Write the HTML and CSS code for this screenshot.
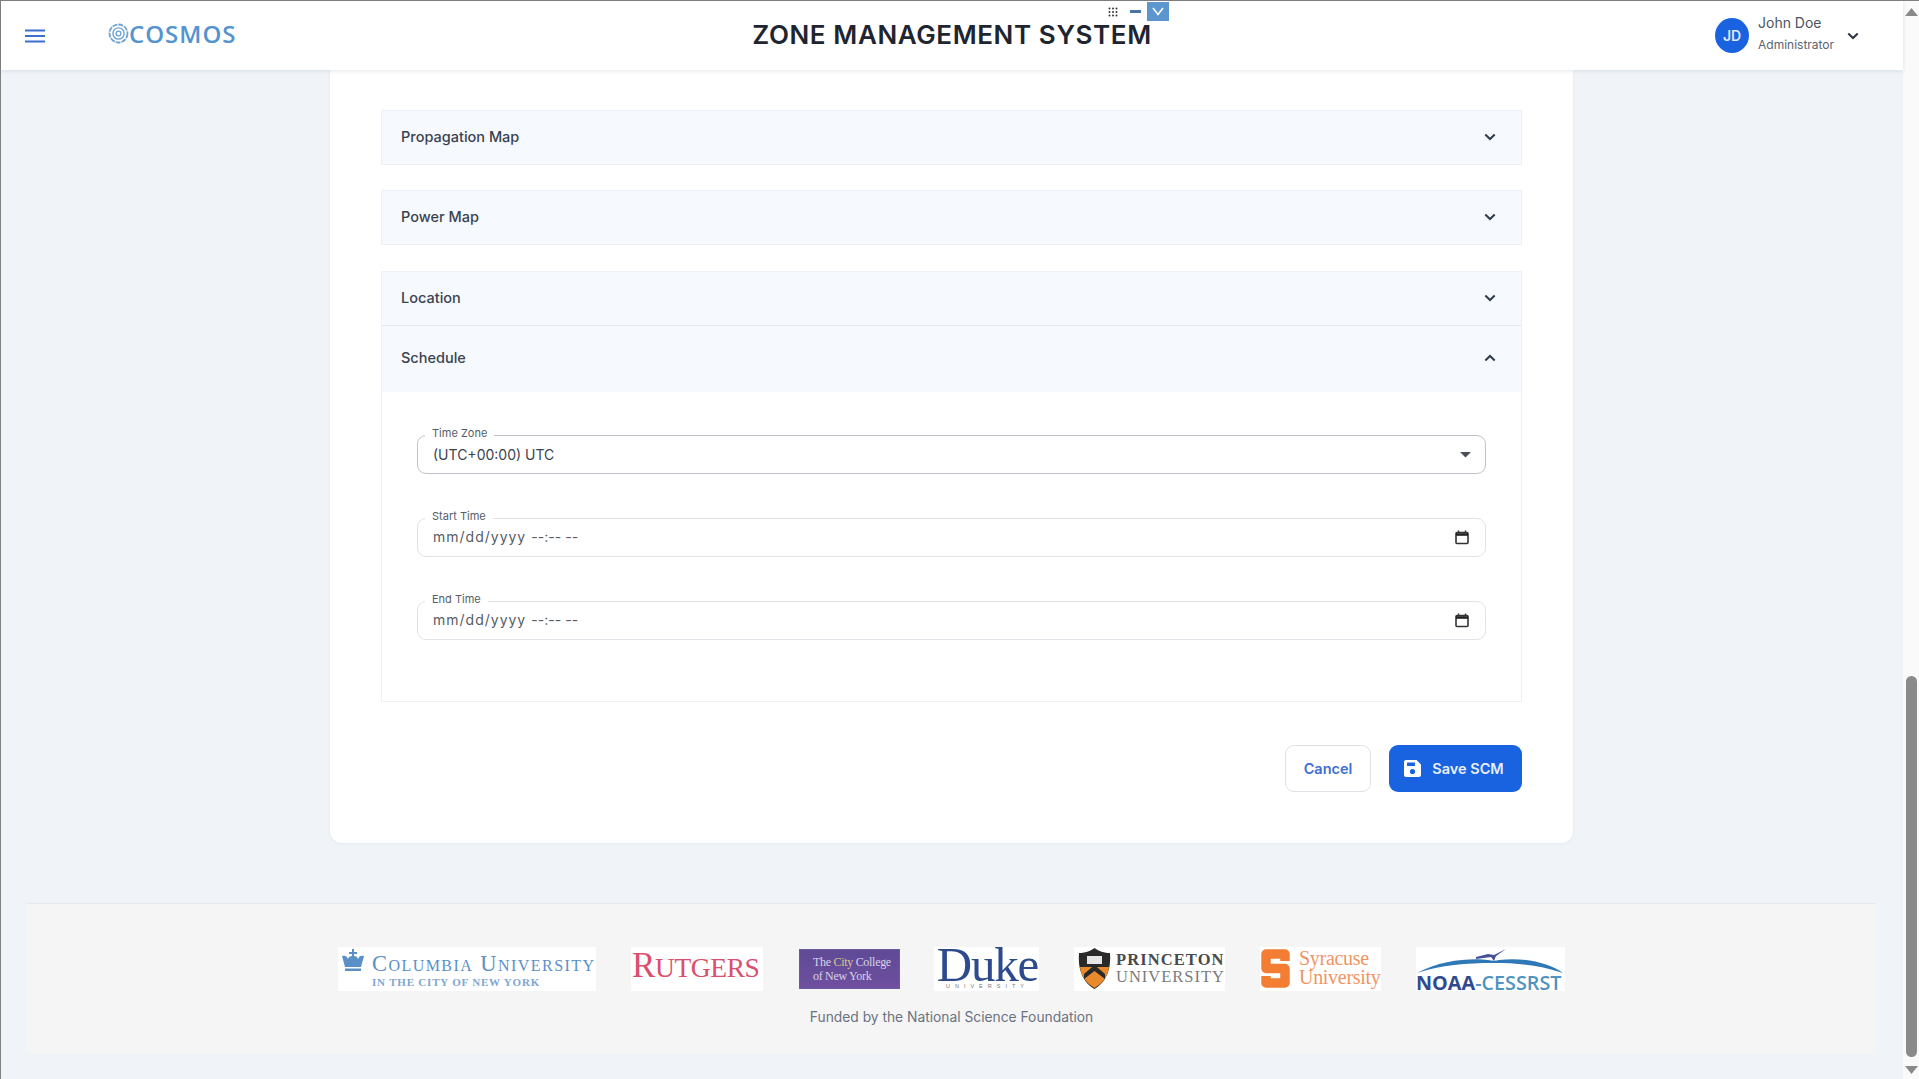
FILE: index.html
```html
<!DOCTYPE html>
<html lang="en">
<head>
<meta charset="utf-8">
<title>Zone Management System</title>
<link rel="stylesheet" href="styles.css">
</head>
<body>
<div class="window">
  <div class="page">
    <header class="topbar">
      <div class="topbar-left">
        <svg class="burger" width="20" height="14" viewBox="0 0 20 14"><path d="M0 1.5h20M0 7h20M0 12.5h20" stroke="#3a6fd0" stroke-width="2"/></svg>
        <div class="logo">
          <svg width="21" height="21" viewBox="0 0 21 21" fill="none" stroke="#6fa3d2"><circle cx="10.5" cy="10.5" r="9" stroke-width="1.8" stroke-dasharray="5 1"/><circle cx="10.5" cy="10.5" r="5.6" stroke-width="1.4"/><circle cx="10.5" cy="10.5" r="2.4" stroke-width="1.3"/></svg>
          <span class="logo-text">COSMOS</span>
        </div>
      </div>
      <h1 class="title">ZONE MANAGEMENT SYSTEM</h1>
      <div class="user">
        <span class="avatar">JD</span>
        <div class="user-info">
          <span class="user-name">John Doe</span>
          <span class="user-role">Administrator</span>
        </div>
        <svg class="user-caret" width="12" height="8" viewBox="0 0 12 8" fill="none"><path d="M1.3 1.5 6 6l4.7-4.5" stroke="#2b3240" stroke-width="2"/></svg>
      </div>
      <div class="float-tools">
        <svg width="10" height="10" viewBox="0 0 10 10" fill="#333"><circle cx="1.5" cy="1.5" r="1"/><circle cx="5" cy="1.5" r="1"/><circle cx="8.5" cy="1.5" r="1"/><circle cx="1.5" cy="5" r="1"/><circle cx="5" cy="5" r="1"/><circle cx="8.5" cy="5" r="1"/><circle cx="1.5" cy="8.5" r="1"/><circle cx="5" cy="8.5" r="1"/><circle cx="8.5" cy="8.5" r="1"/></svg>
        <span class="float-min"></span>
        <span class="float-v"><svg width="12" height="9" viewBox="0 0 12 9" fill="none"><path d="M1 1l5 6.5L11 1" stroke="#fff" stroke-width="1.6"/></svg></span>
      </div>
    </header>

    <main class="content">
      <section class="card">
        <div class="acc acc-single">
          <div class="acc-head"><span>Propagation Map</span><svg class="chev" width="12" height="8" viewBox="0 0 12 8" fill="none"><path d="M1.3 1.5 6 6l4.7-4.5" stroke="#2f3a4a" stroke-width="2"/></svg></div>
        </div>
        <div class="acc acc-single acc-last">
          <div class="acc-head"><span>Power Map</span><svg class="chev" width="12" height="8" viewBox="0 0 12 8" fill="none"><path d="M1.3 1.5 6 6l4.7-4.5" stroke="#2f3a4a" stroke-width="2"/></svg></div>
        </div>
        <div class="acc">
          <div class="acc-head acc-loc"><span>Location</span><svg class="chev" width="12" height="8" viewBox="0 0 12 8" fill="none"><path d="M1.3 1.5 6 6l4.7-4.5" stroke="#2f3a4a" stroke-width="2"/></svg></div>
          <div class="acc-head acc-open"><span>Schedule</span><svg class="chev" width="12" height="8" viewBox="0 0 12 8" fill="none"><path d="M1.3 6.5 6 2l4.7 4.5" stroke="#2f3a4a" stroke-width="2"/></svg></div>
          <div class="acc-body">
            <div class="field field-strong">
              <label class="field-label">Time Zone</label>
              <span class="field-value">(UTC+00:00) UTC</span>
              <svg width="12" height="6" viewBox="0 0 12 6"><path d="M0 0h11L5.500 5.500z" fill="#4a4f57"/></svg>
            </div>
            <div class="field">
              <label class="field-label">Start Time</label>
              <span class="field-value field-date">mm/dd/yyyy <span class="date-time">--:-- --</span></span>
              <svg class="cal" width="14" height="15" viewBox="0 0 14 15" fill="none"><rect x="1" y="2.500" width="12" height="11" rx="1" stroke="#333" stroke-width="1.600"/><path d="M1 4.500h12" stroke="#222" stroke-width="2.600"/><path d="M3.500 0.500v2M10.500 0.500v2" stroke="#333" stroke-width="1.400"/></svg>
            </div>
            <div class="field">
              <label class="field-label">End Time</label>
              <span class="field-value field-date">mm/dd/yyyy <span class="date-time">--:-- --</span></span>
              <svg class="cal" width="14" height="15" viewBox="0 0 14 15" fill="none"><rect x="1" y="2.500" width="12" height="11" rx="1" stroke="#333" stroke-width="1.600"/><path d="M1 4.500h12" stroke="#222" stroke-width="2.600"/><path d="M3.500 0.500v2M10.500 0.500v2" stroke="#333" stroke-width="1.400"/></svg>
            </div>
          </div>
        </div>
        <div class="actions">
          <button class="btn btn-cancel" type="button">Cancel</button>
          <button class="btn btn-save" type="button">
            <svg width="17" height="17" viewBox="0 0 17 17"><path d="M2 0h10.500L17 4.500V15a2 2 0 0 1-2 2H2a2 2 0 0 1-2-2V2a2 2 0 0 1 2-2z" fill="#fff"/><rect x="3" y="2.500" width="8" height="3.500" rx=".5" fill="#1a63e0"/><circle cx="8.500" cy="11.500" r="2.600" fill="#1a63e0"/></svg>
            Save SCM
          </button>
        </div>
      </section>

      <footer class="footer">
        <div class="logos">
          <div class="lg lg-columbia">
            <svg width="24" height="23" viewBox="0 0 24 23" fill="#5b90c6"><path d="M11 0h2v3h3v2h-3v4h-2V5H8V3h3zM1 7c3-1 5 0 6 3 1-3 3-3 5-3s4 0 5 3c1-3 3-4 6-3l-3 11H4zM4 19.500h16V22H4z"/></svg>
            <div class="col-text"><span class="col-main">Columbia University</span><span class="col-sub">IN THE CITY OF NEW YORK</span></div>
          </div>
          <div class="lg lg-rutgers"><span>R</span>UTGERS</div>
          <div class="lg lg-ccny"><span>The <em>City</em> College</span><span>of New York</span></div>
          <div class="lg lg-duke"><span class="duke-main">Duke</span><span class="duke-sub">UNIVERSITY</span></div>
          <div class="lg lg-princeton">
            <svg width="33" height="41" viewBox="0 0 33 41"><path d="M16.500 0C13 3 6 5 1 5c-1 14 2 28 15.500 36C30 33 33 19 32 5c-5 0-12-2-15.500-5z" fill="#2a2a2a"/><path d="M2 19h29c-1 9-6 16-14.500 21C8 35 3 28 2 19z" fill="#ea8a2c"/><path d="M6 26l10.500-9L27 26v5l-10.500-8L6 31z" fill="#2a2a2a"/><rect x="9" y="8" width="15" height="8" fill="#e6e6e6"/></svg>
            <div class="pr-text"><span class="pr-main">PRINCETON</span><span class="pr-sub">UNIVERSITY</span></div>
          </div>
          <div class="lg lg-syracuse">
            <svg width="29" height="39" viewBox="0 0 29 39" fill="none"><path d="M24 12V5H5v14.500h19V34H5v-7" stroke="#f37d33" stroke-width="9.500" stroke-linejoin="round"/></svg>
            <div class="sy-text"><span>Syracuse</span><span>University</span></div>
          </div>
          <div class="lg lg-noaa">
            <svg class="noaa-arc" width="149" height="27" viewBox="0 0 149 27"><path d="M1 26C25 13 55 11 72 13c4 1 8 1 11 0 25-3 50 3 64 13-24-8-44-10-70-10S25 18 1 26z" fill="#2e78b8"/><path d="M60 10l12-3 6 1 12-6-10 7-2 5-3-4-15 2z" fill="#45509a"/></svg>
            <div class="noaa-text"><b>NOAA</b><span>-CESSRST</span></div>
          </div>
        </div>
        <p class="funded">Funded by the National Science Foundation</p>
      </footer>
    </main>
  </div>
  <aside class="scrollbar">
    <svg width="13" height="8" viewBox="0 0 13 8"><path d="M6.500 0 13 8H0z" fill="#8a8a8a"/></svg>
    <div class="thumb"></div>
    <svg width="13" height="8" viewBox="0 0 13 8"><path d="M6.500 8 13 0H0z" fill="#8a8a8a"/></svg>
  </aside>
</div>
</body>
</html>
```

FILE: styles.css
```css
* { box-sizing: border-box; }
html, body { margin: 0; height: 100%; overflow: hidden; }
body { font-family: Inter, "Noto Sans", sans-serif; color: #374151; background: #f0f4f9; }

.window { display: flex; height: 1079px; border-top: 1px solid #808080; border-left: 1px solid #808080; }
.page { flex: 1; min-width: 0; display: flex; flex-direction: column; background: #f0f4f9; }

.topbar { position: relative; z-index: 2; height: 69px; flex: none; background: #fff; box-shadow: 0 1px 4px rgba(30,50,80,.12); display: grid; grid-template-columns: 1fr auto 1fr; align-items: center; padding: 0 24px; }
.topbar-left { display: flex; align-items: center; gap: 63px; }
.burger { display: block; }
.logo { display: flex; align-items: center; margin-top: -4px; }
.logo-text { font-family: "Open Sans", sans-serif; font-weight: 600; font-size: 24px; letter-spacing: 1px; color: #5394d0; line-height: 1; }
.title { margin: 0 0 1px; font-size: 26px; font-weight: 600; letter-spacing: .6px; color: #1f2530; line-height: 1; white-space: nowrap; }
.user { justify-self: end; display: flex; align-items: center; padding-right: 20px; }
.avatar { width: 34px; height: 35px; border-radius: 50%; background: #1a63e0; color: #dfe8fa; font-size: 14px; font-weight: 600; display: flex; align-items: center; justify-content: center; margin-top: -1px; }
.user-info { display: flex; flex-direction: column; margin-left: 9px; width: 76px; gap: 9px; margin-top: -4px; white-space: nowrap; }
.user-name { font-size: 14px; color: #4b5563; line-height: 14px; }
.user-role { font-size: 12px; color: #5b6470; line-height: 12px; }
.user-caret { margin-left: 13px; }
.float-tools { position: absolute; left: 1107px; top: 1px; height: 19px; display: flex; align-items: center; }
.float-min { width: 11px; height: 3px; background: #4a74a4; margin-left: 12px; }
.float-v { width: 22px; height: 19px; background: #5b96cf; margin-left: 6px; display: flex; align-items: center; justify-content: center; }

.content { flex: 1; display: flex; flex-direction: column; align-items: center; min-height: 0; padding-right: 1px; }
.card { width: 1243px; height: 773px; flex: none; background: #fff; border-radius: 0 0 12px 12px; box-shadow: 0 1px 3px rgba(30,50,80,.06); padding: 40px 51px 0; display: flex; flex-direction: column; }
.acc { border: 1px solid #edf0f4; flex: none; }
.acc-single { margin-bottom: 25px; }
.acc-last { margin-bottom: 26px; }
.acc-head { height: 53px; padding: 0 25px 2px 19px; background: #f6f9fd; display: flex; align-items: center; justify-content: space-between; font-size: 14.500px; font-weight: 500; color: #3a4350; }
.chev { display: block; margin-top: 1px; }
.acc-loc { padding-bottom: 3px; }
.acc-open { height: 67px; padding-bottom: 3px; border-top: 1px solid #e4e8ed; }
.acc-body { height: 309px; padding: 43px 35px 0; display: flex; flex-direction: column; gap: 44px; }

.field { position: relative; height: 39px; flex: none; border: 1px solid #e0e3e8; border-radius: 9px; display: flex; align-items: center; justify-content: space-between; padding: 0 16px 0 15px; }
.field-strong { border-color: #bfc3c9; border-width: 1.500px; padding-right: 13px; }
.field-label { position: absolute; left: 7px; top: -9px; padding: 0 7px; background: #fff; font-size: 11px; line-height: 13px; color: #555d68; }
.field-value { font-size: 14px; color: #3c434e; margin-top: -1px; }
.field-date { letter-spacing: 1px; color: #555c66; margin-top: -2px; }
.date-time { letter-spacing: .05px; }
.cal { display: block; }

.actions { display: flex; justify-content: flex-end; gap: 18px; margin-top: 43px; }
.btn { height: 47px; border-radius: 9px; font-family: Inter, sans-serif; font-size: 14.500px; font-weight: 600; display: flex; align-items: center; justify-content: center; }
.btn-cancel { width: 86px; background: #fff; border: 1.500px solid #dfe2e7; color: #3f6fd0; }
.btn-save { width: 133px; background: #1a63e0; border: 0; color: #e8effc; gap: 11px; padding-right: 9px; }

.footer { width: 1849px; height: 151px; flex: none; margin-top: 60px; background: #f5f5f5; border-top: 1px solid #e6e8eb; padding-top: 43px; }
.logos { display: flex; justify-content: center; gap: 35px; }
.lg { height: 44px; flex: none; background: #fff; }
.lg-columbia { width: 258px; display: flex; gap: 7px; padding: 2px 0 0 3px; }
.col-text { display: flex; flex-direction: column; font-family: "Liberation Serif", serif; color: #5b90c6; padding-top: 3px; }
.col-main { font-variant: small-caps; font-size: 22.500px; line-height: 23px; letter-spacing: 1.450px; white-space: nowrap; }
.col-sub { font-size: 11px; line-height: 14px; font-weight: 700; letter-spacing: .8px; color: #7fa7d0; white-space: nowrap; }
.lg-rutgers { width: 132px; font-family: "Liberation Serif", serif; color: #d9506e; font-size: 27.500px; line-height: 38px; padding-left: 1px; white-space: nowrap; letter-spacing: -.4px; }
.lg-rutgers span { font-size: 35px; }
.lg-ccny { width: 101px; height: 40px; margin: 2px -1px 0 1px; background: linear-gradient(#5e4a96, #6f4f9f); border: 1px solid #6b5a9c; font-family: "Liberation Serif", serif; color: #d8d2e6; font-size: 12px; line-height: 14px; padding: 5px 0 0 13px; display: flex; flex-direction: column; letter-spacing: -.3px; }
.lg-ccny em { font-style: normal; color: #d8c98a; }
.lg-duke { width: 105px; display: flex; flex-direction: column; align-items: center; padding-left: 2px; font-family: "Liberation Serif", serif; color: #2c4a8c; }
.duke-main { font-size: 49px; line-height: 36px; letter-spacing: -1.200px; }
.duke-sub { font-family: "Liberation Sans", sans-serif; font-size: 5.500px; line-height: 7px; letter-spacing: 5px; color: #777; }
.lg-princeton { width: 151px; display: flex; gap: 5px; padding: 1px 0 0 4px; }
.pr-text { display: flex; flex-direction: column; font-family: "Liberation Serif", serif; white-space: nowrap; padding-top: 4px; }
.pr-main { font-size: 16.500px; line-height: 16px; font-weight: 700; letter-spacing: 1.100px; color: #4a4a4a; }
.pr-sub { font-size: 16.500px; line-height: 17px; letter-spacing: 1px; color: #7b7b7b; }
.lg-syracuse { width: 121px; display: flex; gap: 9px; padding: 2px 0 0 1px; }
.sy-text { display: flex; flex-direction: column; font-family: "Liberation Serif", serif; color: #ef9565; font-size: 20px; line-height: 19px; letter-spacing: -.3px; }
.lg-noaa { width: 149px; }
.noaa-arc { display: block; }
.noaa-text { font-family: "Open Sans", sans-serif; font-size: 19.800px; line-height: 17px; white-space: nowrap; }
.noaa-text b { color: #2f4a8f; }
.noaa-text span { color: #4f93c0; font-weight: 600; }
.funded { margin: 18px 0 0; text-align: center; font-size: 13.800px; line-height: 16px; color: #6b7280; }

.scrollbar { width: 16px; flex: none; background: #fafafa; display: flex; flex-direction: column; align-items: center; padding-top: 7px; }
.thumb { width: 11px; height: 381px; margin-top: 660px; margin-bottom: 9px; background: #8a8a8a; border-radius: 6px; }
```
